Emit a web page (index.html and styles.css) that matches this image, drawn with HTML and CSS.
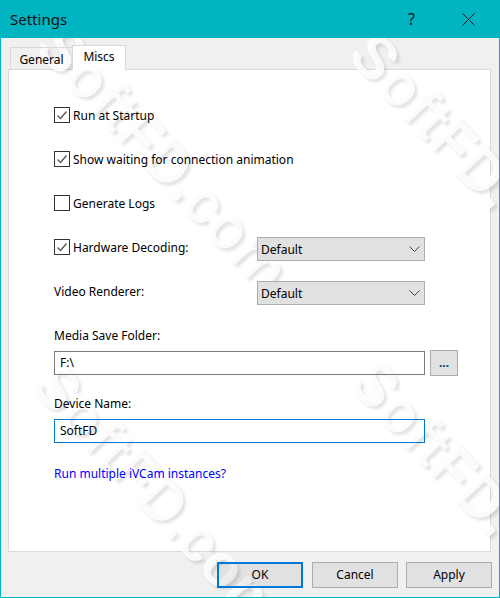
FILE: index.html
```html
<!DOCTYPE html>
<html lang="en">
<head>
  <meta charset="UTF-8" />
  <meta name="viewport" content="width=device-width, initial-scale=1" />
  <title>Settings</title>
  <link rel="stylesheet" href="styles.css">
</head>
<body>

  <div class="window">
    <div class="titlebar">
      <span class="title">Settings</span>
      <span class="help">?</span>
      <svg class="close" width="13" height="13" viewBox="0 0 13 13" aria-label="Close">
        <path d="M0.5 0.5 L12.5 12.5 M12.5 0.5 L0.5 12.5" stroke="#111" stroke-width="1" fill="none" />
      </svg>
    </div>

    <div class="body">
      <div class="tabs">
        <div class="tab">General</div>
        <div class="tab active">Miscs</div>
      </div>

      <div class="panel">
        <div class="row">
          <span class="check on"><svg width="14" height="14" viewBox="0 0 14 14"><path d="M2.5 7.5 L5.5 10.5 L11.5 3.5" stroke="#555" stroke-width="1.3" fill="none" /></svg></span>
          <span>Run at Startup</span>
        </div>
        <div class="row">
          <span class="check on"><svg width="14" height="14" viewBox="0 0 14 14"><path d="M2.5 7.5 L5.5 10.5 L11.5 3.5" stroke="#555" stroke-width="1.3" fill="none" /></svg></span>
          <span>Show waiting for connection animation</span>
        </div>
        <div class="row">
          <span class="check"></span>
          <span>Generate Logs</span>
        </div>
        <div class="row">
          <span class="row-label">
            <span class="check on"><svg width="14" height="14" viewBox="0 0 14 14"><path d="M2.5 7.5 L5.5 10.5 L11.5 3.5" stroke="#555" stroke-width="1.3" fill="none" /></svg></span>
            <span>Hardware Decoding:</span>
          </span>
          <div class="select">
            <span>Default</span>
            <svg width="11" height="6" viewBox="0 0 11 6"><path d="M0.5 0.5 L5.5 5.5 L10.5 0.5" stroke="#444" fill="none" /></svg>
          </div>
        </div>
        <div class="row">
          <span class="row-label">Video Renderer:</span>
          <div class="select">
            <span>Default</span>
            <svg width="11" height="6" viewBox="0 0 11 6"><path d="M0.5 0.5 L5.5 5.5 L10.5 0.5" stroke="#444" fill="none" /></svg>
          </div>
        </div>

        <div class="field-label">Media Save Folder:</div>
        <div class="field-row">
          <div class="input">F:\</div>
          <div class="browse">...</div>
        </div>

        <div class="field-label second">Device Name:</div>
        <div class="input focused">SoftFD</div>

        <a class="link" href="#">Run multiple iVCam instances?</a>
      </div>

      <div class="buttons">
        <div class="btn default">OK</div>
        <div class="btn">Cancel</div>
        <div class="btn">Apply</div>
      </div>

      <div class="watermark w1">SoftFD.com</div>
      <div class="watermark w2">SoftFD.com</div>
      <div class="watermark w3">SoftFD.com</div>
      <div class="watermark w4">SoftFD.com</div>
    </div>
  </div>

</body>
</html>
```

FILE: styles.css
```css
html, body {
  margin: 0;
  padding: 0;
}
body {
  font-family: "Noto Sans", "Open Sans", Arial, sans-serif;
  font-size: 12px;
  color: #000;
}
.window {
  width: 500px;
  height: 598px;
  box-sizing: border-box;
  background: #00b4c1;
  padding: 0 1px 1px 1px;
  display: flex;
  flex-direction: column;
  overflow: hidden;
}
.titlebar {
  height: 38px;
  flex: none;
  display: flex;
  align-items: center;
  padding-left: 9px;
  color: #111;
}
.title {
  font-size: 15px;
  flex: 1;
}
.help {
  font-size: 16px;
  width: 16px;
  margin-right: 38px;
}
.close {
  margin-right: 24px;
}
.body {
  position: relative;
  flex: 1;
  background: #f0f0f0;
  overflow: hidden;
  padding: 8px 8px 0 7px;
}
.tabs {
  display: flex;
  align-items: flex-end;
  height: 23px;
  padding-left: 2px;
  position: relative;
  z-index: 2;
}
.tab {
  height: 22px;
  box-sizing: border-box;
  width: 63px;
  border: 1px solid #d9d9d9;
  border-bottom: none;
  text-align: center;
  line-height: 23px;
}
.tab.active {
  width: 54px;
  height: 25px;
  margin-left: -1px;
  margin-bottom: -1px;
  background: #fff;
  line-height: 21px;
}
.panel {
  height: 483px;
  box-sizing: border-box;
  background: #fff;
  border: 1px solid #d9d9d9;
  padding: 23px 30px 0 45px;
}
.row, .field-label, .field-row, .input, .link, .buttons {
  position: relative;
  z-index: 2;
}
.row {
  height: 44px;
  display: flex;
  align-items: center;
}
.row-label {
  width: 203px;
  display: flex;
  align-items: center;
}
.check {
  width: 16px;
  height: 16px;
  box-sizing: border-box;
  border: 1px solid #333;
  margin-right: 3px;
  flex: none;
  display: flex;
  align-items: center;
  justify-content: center;
}
.select {
  width: 168px;
  height: 24px;
  margin-top: 4px;
  box-sizing: border-box;
  border: 1px solid #adadad;
  background: #e1e1e1;
  display: flex;
  align-items: center;
  justify-content: space-between;
  padding: 0 4px 0 3px;
}
.field-label {
  margin-top: 12px;
  height: 25px;
  line-height: 22px;
}
.field-label.second {
  margin-top: 17px;
  height: 26px;
}
.field-row {
  display: flex;
  align-items: center;
  gap: 5px;
}
.input {
  width: 371px;
  height: 24px;
  box-sizing: border-box;
  border: 1px solid #7a7a7a;
  line-height: 22px;
  padding-left: 5px;
}
.input.focused {
  border-color: #0078d7;
}
.browse {
  width: 28px;
  height: 26px;
  box-sizing: border-box;
  border: 1px solid #adadad;
  background: #e1e1e1;
  text-align: center;
  line-height: 24px;
  color: #00427a;
  font-weight: bold;
}
.link {
  display: block;
  margin-top: 22px;
  color: #0000ff;
  text-decoration: none;
}
.buttons {
  display: flex;
  justify-content: flex-end;
  gap: 8px;
  margin-top: 10px;
  margin-right: -1px;
}
.btn {
  width: 86px;
  height: 26px;
  box-sizing: border-box;
  border: 1px solid #adadad;
  background: rgba(0, 0, 0, 0.06);
  text-align: center;
  line-height: 24px;
}
.btn.default {
  border: 2px solid #0078d7;
  line-height: 22px;
  margin-right: 1px;
}
.watermark {
  position: absolute;
  z-index: 1;
  font-family: "Liberation Sans", Arial, sans-serif;
  font-weight: bold;
  font-size: 60px;
  line-height: 60px;
  white-space: nowrap;
  color: rgba(255, 255, 255, 0.85);
  text-shadow: 4px 0 3px rgba(0, 0, 0, 0.11);
  transform: rotate(47deg);
  transform-origin: 0 50%;
  pointer-events: none;
}
.w1 { left: 47px; top: -33px; }
.w2 { left: 360px; top: -25px; }
.w3 { left: 42px; top: 305px; }
.w4 { left: 360px; top: 302px; }
```
